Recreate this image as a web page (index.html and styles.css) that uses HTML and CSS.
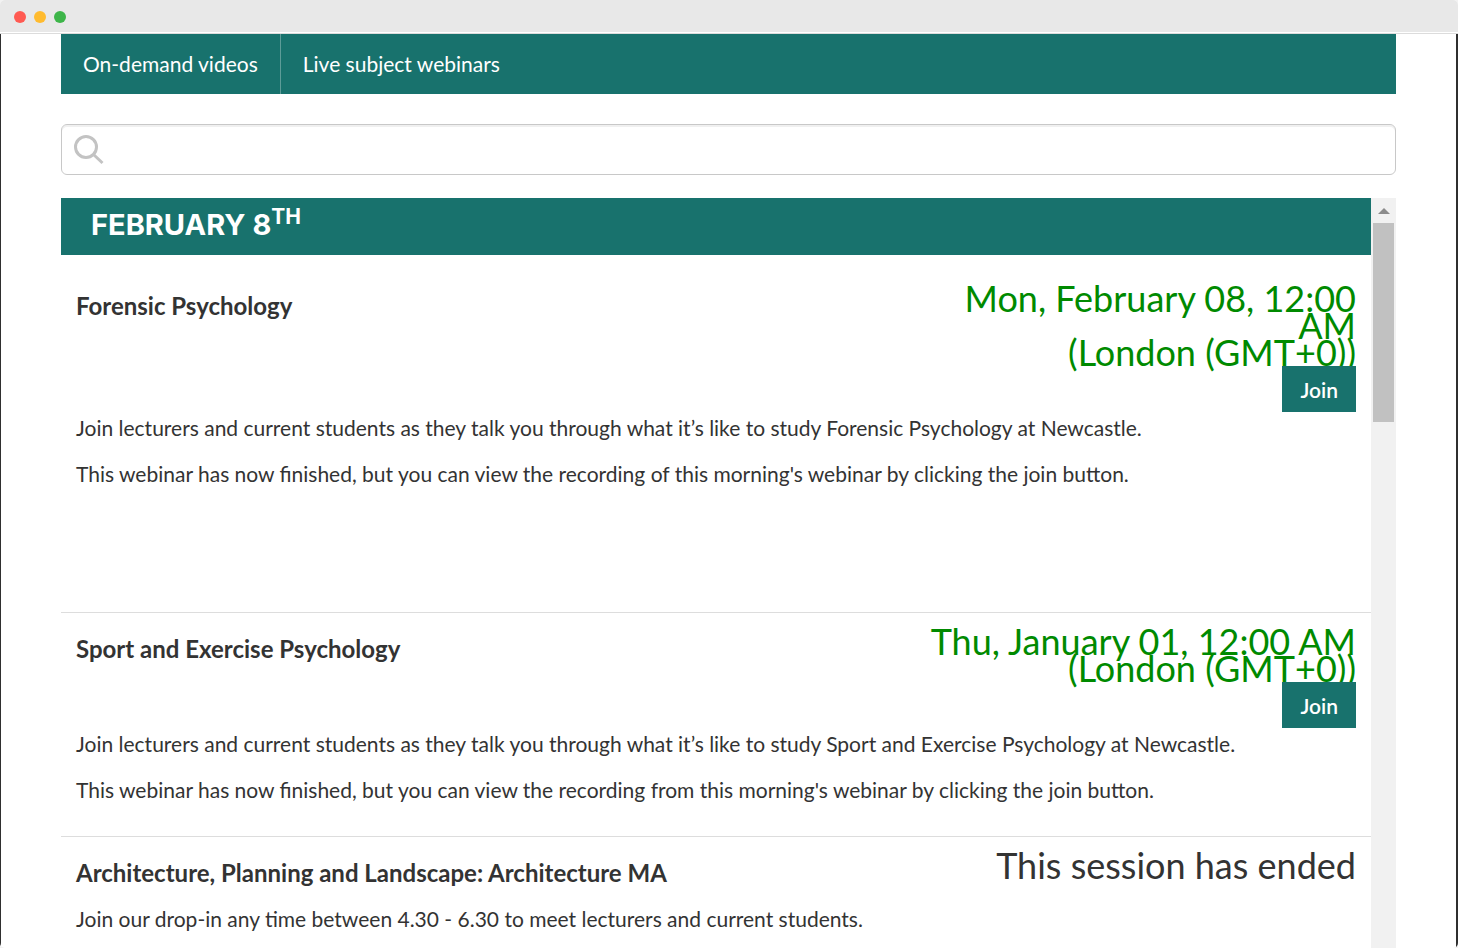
FILE: index.html
```html
<!DOCTYPE html>
<html lang="en">
<head>
<meta charset="utf-8">
<title>Live subject webinars</title>
<link rel="stylesheet" href="styles.css">
</head>
<body>
<div class="window">
  <header class="titlebar">
    <span class="dot dot-close"></span>
    <span class="dot dot-minimise"></span>
    <span class="dot dot-expand"></span>
  </header>
  <main class="page">
    <nav class="tabs">
      <a class="tab" href="#videos">On-demand videos</a>
      <a class="tab" href="#webinars">Live subject webinars</a>
    </nav>
    <label class="search">
      <svg class="search-icon" viewBox="0 0 30 30" aria-hidden="true">
        <circle cx="12" cy="12" r="10.5"/>
        <path d="M19.5 19.5L28.5 28"/>
      </svg>
      <input class="search-input" type="search" aria-label="Search webinars">
    </label>
    <div class="schedule">
      <div class="sessions">
        <h2 class="day">February 8<sup class="ordinal">th</sup></h2>
        <article class="session session-first">
          <div class="session-head">
            <h3 class="title">Forensic Psychology</h3>
            <div class="status">
              <p class="date">Mon, February 08, 12:00 AM<br>(London (GMT+0))</p>
              <button class="join" type="button">Join</button>
            </div>
          </div>
          <p class="text">Join lecturers and current students as they talk you through what it’s like to study Forensic Psychology at Newcastle.</p>
          <p class="text">This webinar has now finished, but you can view the recording of this morning's webinar by clicking the join button.</p>
        </article>
        <article class="session">
          <div class="session-head">
            <h3 class="title">Sport and Exercise Psychology</h3>
            <div class="status">
              <p class="date">Thu, January 01, 12:00 AM<br>(London (GMT+0))</p>
              <button class="join" type="button">Join</button>
            </div>
          </div>
          <p class="text">Join lecturers and current students as they talk you through what it’s like to study Sport and Exercise Psychology at Newcastle.</p>
          <p class="text">This webinar has now finished, but you can view the recording from this morning's webinar by clicking the join button.</p>
        </article>
        <article class="session">
          <div class="session-head">
            <h3 class="title">Architecture, Planning and Landscape: Architecture MA</h3>
            <div class="status">
              <p class="date date-ended">This session has ended</p>
            </div>
          </div>
          <p class="text">Join our drop-in any time between 4.30 - 6.30 to meet lecturers and current students.</p>
        </article>
      </div>
      <div class="scrollbar" aria-hidden="true">
        <svg class="scroll-arrow" viewBox="0 0 12 6"><path d="M0 6L6 0L12 6Z"/></svg>
        <div class="scroll-thumb"></div>
      </div>
    </div>
  </main>
</div>
</body>
</html>
```
FILE: styles.css
```css
* {
  box-sizing: border-box;
}

body {
  margin: 0;
  background: #f2f2f2;
  color: #333;
  font-family: Lato, "Open Sans", sans-serif;
  font-size: 21px;
  line-height: 31px;
}

h2, h3, p {
  margin: 0;
}

.window {
  display: flex;
  flex-direction: column;
  height: 100vh;
  border-radius: 5px;
  overflow: hidden;
  background: #fff;
}

.titlebar {
  display: flex;
  flex: none;
  align-items: center;
  gap: 8px;
  height: 34px;
  padding-left: 14px;
  background: #e8e8e8;
  border-bottom: 1px solid #dcdcdc;
  box-shadow: inset 0 -1px #fff;
}

.dot {
  width: 12px;
  height: 12px;
  border-radius: 50%;
}

.dot-close { background: #ff5a52; }
.dot-minimise { background: #ffbb2f; }
.dot-expand { background: #3db549; }

.page {
  display: flex;
  flex: 1;
  flex-direction: column;
  min-height: 0;
  padding: 0 60px;
  border: solid #2f2f2f;
  border-width: 0 2px 0 1px;
}

.tabs {
  display: flex;
  flex: none;
  background: #18726d;
}

.tab {
  padding: 14px 22px 15px;
  color: #fff;
  text-decoration: none;
}

.tab + .tab {
  border-left: 1px solid #5d9c98;
}

.search {
  display: flex;
  flex: none;
  align-items: center;
  gap: 12px;
  height: 51px;
  margin: 30px 0 23px;
  padding: 0 12px;
  border: 1px solid #c8c8c8;
  border-radius: 6px;
  box-shadow: inset 0 2px #f0f0f0;
}

.search-icon {
  flex: none;
  width: 30px;
  height: 30px;
  fill: none;
  stroke: #c3c3c3;
  stroke-width: 3;
}

.search-input {
  flex: 1;
  border: 0;
  outline: 0;
  background: none;
  font: inherit;
}

.schedule {
  display: flex;
  flex: 1;
  min-height: 0;
}

.sessions {
  flex: 1;
  overflow: hidden;
}

.day {
  height: 57px;
  padding: 11px 30px;
  background: #18726d;
  color: #fff;
  font-family: Inter, sans-serif;
  font-size: 29px;
  font-weight: 700;
  text-transform: uppercase;
}

.ordinal {
  font-size: 21px;
  line-height: 0;
}

.session {
  padding: 15px 15px 16px;
  border-bottom: 1px solid #ddd;
}

.session-first {
  padding-top: 30px;
  padding-bottom: 108px;
}

.session-head {
  display: flex;
  justify-content: space-between;
}

.title {
  padding: 5px 0 15px;
  font-size: 24px;
  font-weight: 700;
}

.status {
  display: flex;
  flex-direction: column;
  align-items: flex-end;
  width: 34%;
}

.date {
  color: #008a00;
  font-size: 36px;
  line-height: 27px;
  text-align: right;
}

.date-ended {
  color: #333;
}

.join {
  position: relative;
  height: 46px;
  padding: 0 18px;
  border: 0;
  background: #18726d;
  color: #fff;
  font: inherit;
  font-weight: 600;
}

.text {
  margin-bottom: 15px;
}

.scrollbar {
  display: flex;
  flex: none;
  flex-direction: column;
  align-items: center;
  width: 25px;
  background: #f1f1f1;
}

.scroll-arrow {
  width: 12px;
  height: 6px;
  margin: 10px 0 9px;
  fill: #8b8b8b;
}

.scroll-thumb {
  width: 21px;
  height: 199px;
  background: #c1c1c1;
}
```
